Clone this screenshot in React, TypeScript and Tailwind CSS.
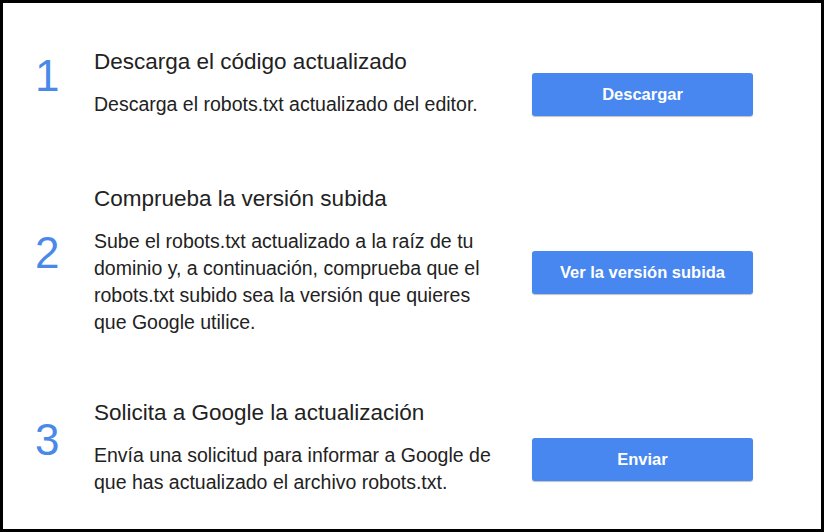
import React from "react";

type Step = {
  n: string;
  title: string;
  lines: string[];
  button: string;
  mt: string;
};

const steps: Step[] = [
  {
    n: "1",
    title: "Descarga el código actualizado",
    lines: ["Descarga el robots.txt actualizado del editor."],
    button: "Descargar",
    mt: "mt-0",
  },
  {
    n: "2",
    title: "Comprueba la versión subida",
    lines: [
      "Sube el robots.txt actualizado a la raíz de tu",
      "dominio y, a continuación, comprueba que el",
      "robots.txt subido sea la versión que quieres",
      "que Google utilice.",
    ],
    button: "Ver la versión subida",
    mt: "mt-[68px]",
  },
  {
    n: "3",
    title: "Solicita a Google la actualización",
    lines: [
      "Envía una solicitud para informar a Google de",
      "que has actualizado el archivo robots.txt.",
    ],
    button: "Enviar",
    mt: "mt-[64px]",
  },
];

export default function App() {
  return (
    <div
      className="w-[824px] h-[532px] bg-white border-[3px] border-black flex flex-col pt-[46px] pl-[32px]"
      style={{ fontFamily: '"Liberation Sans", Arial, sans-serif' }}
    >
      {steps.map((s) => (
        <div key={s.n} className={`flex items-center ${s.mt}`}>
          <div className="w-[59px] mb-4 text-[44px] leading-[44px] text-[#4a89e8]">
            {s.n}
          </div>
          <div className="w-[438px] flex flex-col text-[#222222]">
            <div className="text-[22.5px] leading-[26px] mb-4 whitespace-nowrap">
              {s.title}
            </div>
            <div className="text-[19.5px] leading-[27px] whitespace-nowrap">
              {s.lines.map((l, i) => (
                <div key={i}>{l}</div>
              ))}
            </div>
          </div>
          <button className="mt-[22px] w-[221px] h-[43px] rounded-[3px] bg-[#4787ef] text-white font-bold text-[16.5px] shadow-[0_1px_1px_rgba(0,0,0,0.25)]">
            {s.button}
          </button>
        </div>
      ))}
    </div>
  );
}
